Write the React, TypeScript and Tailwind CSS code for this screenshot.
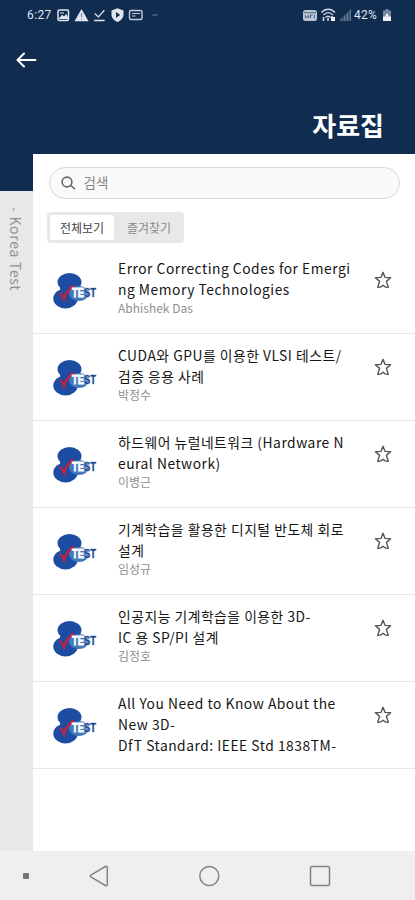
import { useState } from "react";
import clsx from "clsx";

interface Material {
  id: number;
  lines: string[];
  author?: string;
}

const MATERIALS: Material[] = [
  { id: 1, lines: ["Error Correcting Codes for Emergi", "ng Memory Technologies"], author: "Abhishek Das" },
  { id: 2, lines: ["CUDA와 GPU를 이용한 VLSI 테스트/", "검증 응용 사례"], author: "박정수" },
  { id: 3, lines: ["하드웨어 뉴럴네트워크 (Hardware N", "eural Network)"], author: "이병근" },
  { id: 4, lines: ["기계학습을 활용한 디지털 반도체 회로", "설계"], author: "임성규" },
  { id: 5, lines: ["인공지능 기계학습을 이용한 3D-", "IC 용 SP/PI 설계"], author: "김정호" },
  { id: 6, lines: ["All You Need to Know About the", "New 3D-", "DfT Standard: IEEE Std 1838TM-"] },
];

function StatusBar() {
  return (
    <div className="flex h-[30px] items-center justify-between pl-[27px] pr-[23px] font-['Roboto',sans-serif] text-[12px] text-[#dfe5ee]">
      <div className="flex items-center">
        <span className="w-[30px] tracking-[0.4px]">6:27</span>
        <svg width="104" height="16" viewBox="57 7 104 16" fill="none">
          <rect x="58" y="10" width="10.5" height="10.5" rx="1.2" stroke="#dfe5ee" strokeWidth="1.5" />
          <path d="M59.5 18.5l2.6-3 2 1.6 2-2.2 2 3.6zM60 13h4" stroke="#dfe5ee" strokeWidth="1.1" fill="#dfe5ee" />
          <path d="M81.5 9l7 12.2h-14z" fill="#dfe5ee" />
          <path d="M81.5 13v4M81.5 18.2v1.3" stroke="#7d8da5" strokeWidth="1.2" />
          <path d="M94.8 13.5l3.6 3.4 6-6.6M94.2 20.5h10.5" stroke="#dfe5ee" strokeWidth="1.3" />
          <path d="M117.5 8.3l6 2.2v4.3c0 3.3-2.6 5.8-6 7.2-3.4-1.4-6-3.9-6-7.2v-4.3z" fill="#dfe5ee" />
          <path d="M116 12l4.2 2.9-4.2 2.9z" fill="#102d50" />
          <rect x="129.5" y="10.5" width="12.5" height="9" rx="1.5" stroke="#c3ccd9" strokeWidth="1.4" />
          <path d="M132 13.5h8M132 16h3.5" stroke="#c3ccd9" strokeWidth="1.2" />
          <path d="M152.5 15h5" stroke="#61758f" strokeWidth="1.3" />
        </svg>
      </div>
      <div className="flex items-center">
        <svg width="52" height="16" viewBox="302 7 52 16" fill="none">
          <rect x="303" y="10" width="14" height="11" rx="2.5" fill="#b9c3d1" />
          <path d="M304 12.7h12" stroke="#102d50" strokeWidth="0.6" />
          <path d="M305.5 15v3l1.5-1.5 1.5 1.5v-3M310.5 18v-3h2M314.5 15v3" stroke="#44597a" strokeWidth="0.9" />
          <path d="M321.5 12.5c4-4.3 9.5-4.3 13.5 0M323.5 15c3-3 6.5-3 9.5 0M325.5 17.5c1.5-1.5 3.5-1.5 5 0" stroke="#cfd7e2" strokeWidth="1.4" />
          <path d="M328 21v-3M323.5 17v4M332 16v5" stroke="#cfd7e2" strokeWidth="1.6" />
          <rect x="331" y="17" width="4" height="4" fill="#eef1f5" />
          <path d="M339 21h12V9z" fill="#3d5674" />
          <path d="M341.5 18.5v2.5M344.5 15.5V21M347.5 12.5V21M350.5 9.5V21" stroke="#627891" strokeWidth="1" />
        </svg>
        <span className="w-[28px] whitespace-nowrap tracking-[0.2px]">42%</span>
        <svg width="10" height="14" viewBox="0 0 10 14">
          <path d="M3.5 1h3v1.5H9V13H1V2.5h2.5z" fill="#7888a0" />
          <path d="M1 8.5h8V13H1z" fill="#f2f4f7" />
          <path d="M5 5l2 3.5H3z" fill="#f2f4f7" />
        </svg>
      </div>
    </div>
  );
}

function TestLogo() {
  return (
    <svg width="48" height="44" viewBox="50 269 48 44" className="shrink-0">
      <defs>
        <linearGradient id="logo-text" gradientUnits="userSpaceOnUse" x1="72" y1="0" x2="96" y2="0">
          <stop offset="0.51" stopColor="#ffffff" />
          <stop offset="0.51" stopColor="#1d4388" />
        </linearGradient>
        <linearGradient id="logo-edge" gradientUnits="userSpaceOnUse" x1="72" y1="0" x2="96" y2="0">
          <stop offset="0.51" stopColor="#ffffff" />
          <stop offset="0.51" stopColor="#b9cce8" />
        </linearGradient>
      </defs>
      <ellipse cx="69.5" cy="282" rx="12" ry="9" fill="#1c4da3" />
      <ellipse cx="65.5" cy="298.5" rx="12.2" ry="10" fill="#1c4da3" />
      <path d="M60 288l1-3 17 1 2 9-4 8-14-5z" fill="#1c4da3" />
      <ellipse cx="79" cy="293.5" rx="10" ry="7.5" fill="#4678be" />
      <path d="M59.5 293c2.5 1 3.5 3 4.5 6 1.5-6 4.5-9.5 9.5-13.5" fill="none" stroke="#c2203c" strokeWidth="2.4" />
      <text
        x="72"
        y="296.5"
        textLength="24"
        lengthAdjust="spacingAndGlyphs"
        fontFamily="'Liberation Sans', sans-serif"
        fontWeight="700"
        fontSize="12.5"
        paintOrder="stroke"
        fill="url(#logo-text)"
        stroke="url(#logo-edge)"
        strokeWidth="0.8"
      >
        TEST
      </text>
    </svg>
  );
}

function StarIcon({ filled }: { filled: boolean }) {
  return (
    <svg width="18" height="18" viewBox="0 0 18 18" fill={filled ? "#555555" : "none"} stroke="#555555" strokeWidth="1.4" strokeLinejoin="round">
      <path d="M9 1.3l2.1 5.1 5.5.4-4.2 3.6 1.9 5.8c-1.9.5-3.6-.3-5.3-2-1.7 1.7-3.4 2.5-5.3 2l1.9-5.8L1.4 6.800l5.5-.4z" />
    </svg>
  );
}

export default function App() {
  const [tab, setTab] = useState<"all" | "favorites">("all");
  const [favorites, setFavorites] = useState<number[]>([]);

  const toggle = (id: number) => {
    setFavorites((prev) => (prev.includes(id) ? prev.filter((f) => f !== id) : [...prev, id]));
  };

  const items = tab === "all" ? MATERIALS : MATERIALS.filter((m) => favorites.includes(m.id));

  return (
    <div className="flex h-[900px] w-[415px] flex-col overflow-hidden bg-white font-['Noto_Sans_CJK_KR',sans-serif]">
      <header className="flex h-[154px] shrink-0 flex-col bg-[#102d50]">
        <StatusBar />
        <button className="ml-4 mt-[21px] w-[22px]" aria-label="뒤로">
          <svg width="22" height="18" viewBox="0 0 22 18" fill="none" stroke="#ffffff" strokeWidth="2" strokeLinecap="round" strokeLinejoin="round">
            <path d="M19.5 9H1.5M8 2.5L1.5 9 8 15.5" />
          </svg>
        </button>
        <h1 className="mt-auto mb-[9px] pr-[31px] text-right text-[26px] leading-[40px] font-bold text-white">자료집</h1>
      </header>

      <div className="flex min-h-0 flex-1">
        <aside className="flex w-[32.5px] shrink-0 flex-col bg-[#e8e8e8]">
          <div className="h-[36.5px] shrink-0 bg-[#102d50]" />
          <div className="mt-[16.5px] self-center text-[14px] leading-8 tracking-[0.7px] whitespace-nowrap text-[#929292] [writing-mode:vertical-rl]">
            - Korea Test
          </div>
        </aside>

        <main className="flex min-w-0 flex-1 flex-col">
          <div className="ml-[16px] mt-[13px] flex h-8 w-[351px] shrink-0 items-center rounded-full border border-[#d9d9d9] bg-[#fafafa] pl-[11px]">
            <svg width="15" height="14" viewBox="0 0 15 14" fill="none" stroke="#666666" strokeWidth="1.6" strokeLinecap="round">
              <circle cx="6" cy="6" r="4.9" />
              <path d="M9.8 9.5l3.7 3.1" />
            </svg>
            <input
              placeholder="검색"
              className="ml-2 min-w-0 flex-1 bg-transparent pb-px text-[13.5px] tracking-[0.2px] outline-none placeholder:text-[#858585]"
            />
          </div>

          <div className="mt-[13px] ml-[14.5px] flex h-[31px] w-[137px] shrink-0 rounded-[4px] bg-[#e8e8e8] p-[3px] text-[12px] leading-[24px]">
            <button
              onClick={() => setTab("all")}
              className={clsx("w-[64px] rounded-[2px]", tab === "all" ? "bg-white text-[#444444]" : "text-[#8a8a8a]")}
            >
              전체보기
            </button>
            <button
              onClick={() => setTab("favorites")}
              className={clsx("flex-1 rounded-[2px] pl-[3px]", tab === "favorites" ? "bg-white text-[#444444]" : "text-[#8a8a8a]")}
            >
              즐겨찾기
            </button>
          </div>

          <ul className="mt-[4px]">
            {items.map((item) => (
              <li key={item.id} className="flex h-[87px] border-b border-[#e9e9e9] pl-[17.5px]">
                <div className="mt-[22px] h-11">
                  <TestLogo />
                </div>
                <div className="ml-5 w-[240px] pt-[10.5px] whitespace-nowrap">
                  <h2 className="text-[13.8px] leading-[21px] tracking-[0.52px] text-[#151515]">
                    {item.lines.map((line) => (
                      <span key={line} className="block">{line}</span>
                    ))}
                  </h2>
                  {item.author && <p className="text-[12px] leading-4 text-[#909090]">{item.author}</p>}
                </div>
                <button onClick={() => toggle(item.id)} className="mt-[24px] ml-[16px] h-[18px]" aria-label="즐겨찾기">
                  <StarIcon filled={favorites.includes(item.id)} />
                </button>
              </li>
            ))}
          </ul>
        </main>
      </div>

      <nav className="flex h-[49px] shrink-0 items-center bg-[#efefef] pl-[23px]">
        <span className="size-[6px] rounded-[1px] bg-[#777777]" />
        <svg className="ml-[60px]" width="20" height="22" viewBox="0 0 20 22" fill="none" stroke="#858585" strokeWidth="1.5" strokeLinejoin="round">
          <path d="M1.8 10.2L16.5 1.5c.9-.5 1.8 0 1.8 1v17c0 1-.9 1.5-1.8 1L1.8 11.800c-.8-.5-.8-1.100 0-1.600z" />
        </svg>
        <svg className="ml-[89px]" width="22" height="22" viewBox="0 0 22 22" fill="none" stroke="#858585" strokeWidth="1.5">
          <circle cx="11.3" cy="11" r="9.5" />
        </svg>
        <svg className="ml-[89px]" width="22" height="22" viewBox="0 0 22 22" fill="none" stroke="#858585" strokeWidth="1.5">
          <rect x="1.5" y="1.5" width="19" height="19" rx="1.5" />
        </svg>
      </nav>
    </div>
  );
}
